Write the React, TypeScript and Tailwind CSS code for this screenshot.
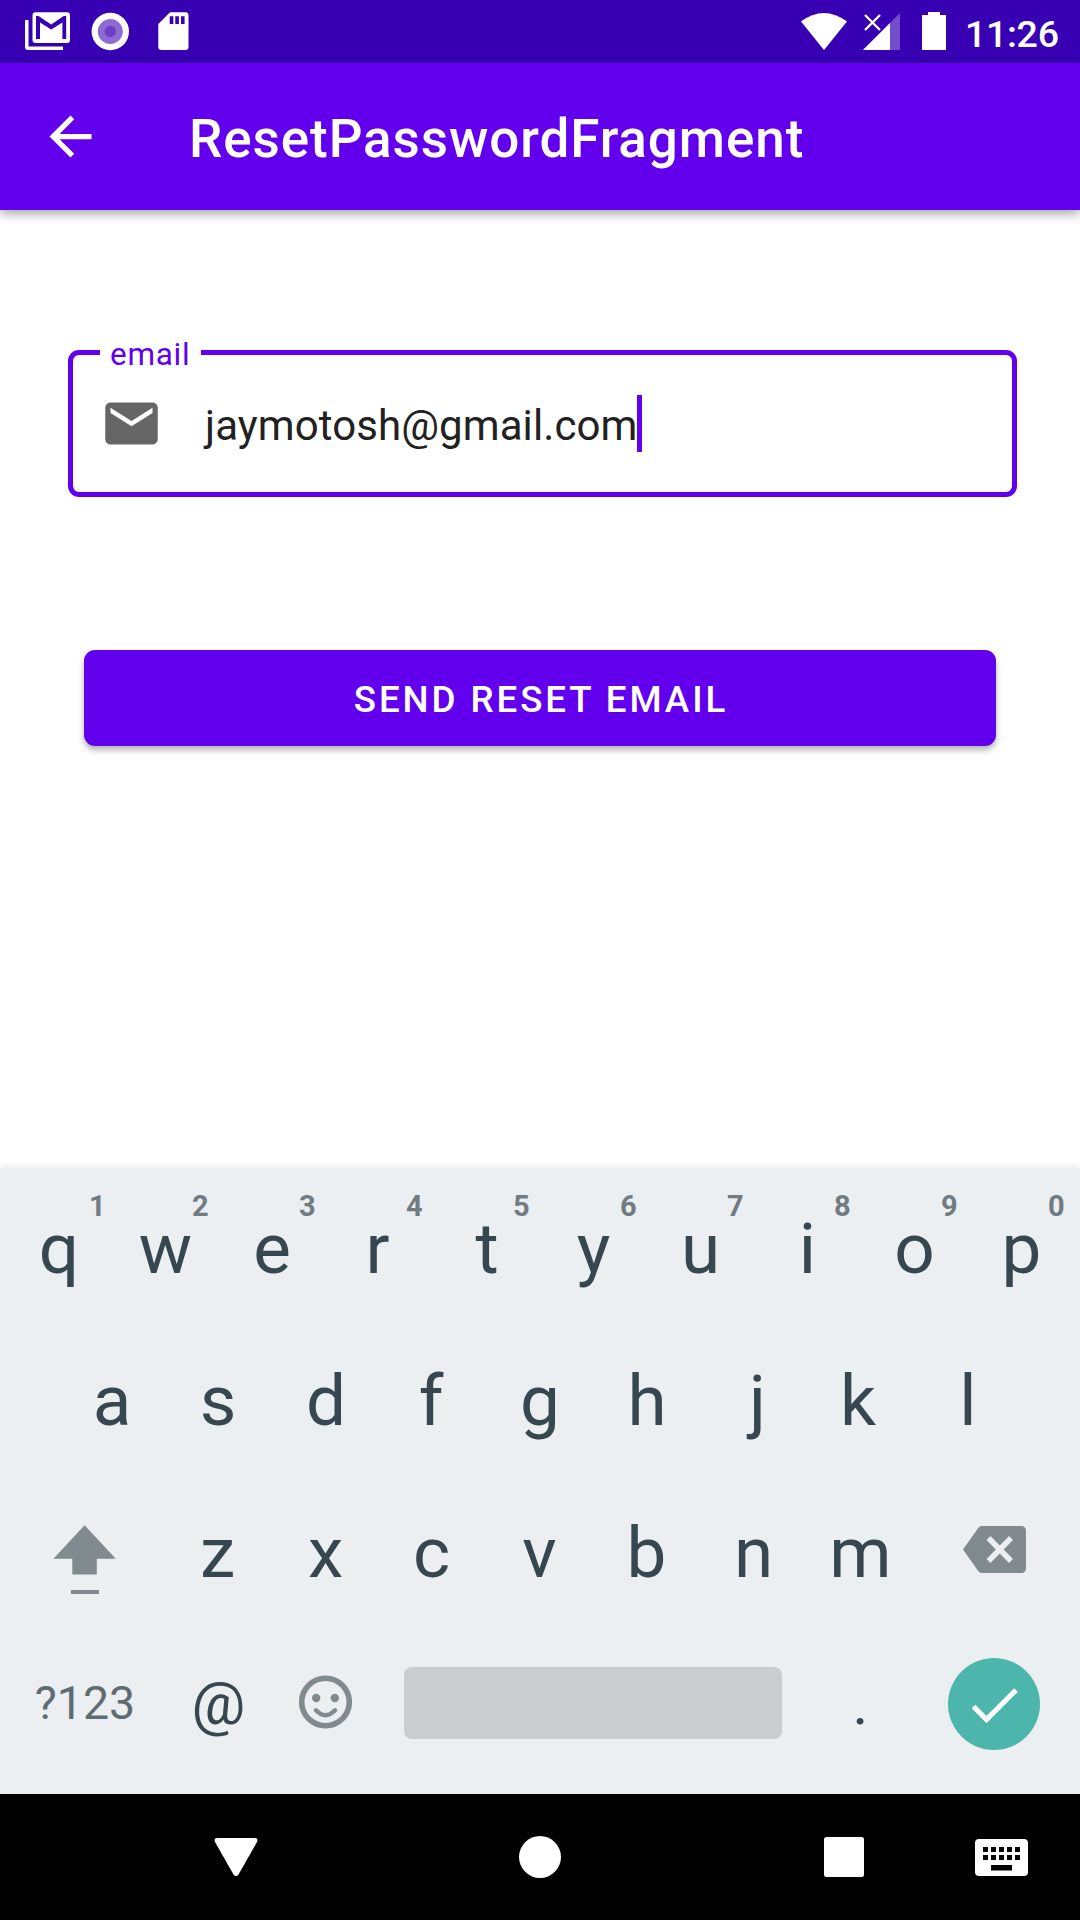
import React from "react";

const hints = ["1", "2", "3", "4", "5", "6", "7", "8", "9", "0"];

// Optical offsets for glyphs whose ink is not centred in the advance width.
const nudge: Record<string, string> = {
  q: "ml-[1px]",
  e: "-ml-[1px]",
  r: "-ml-[4px]",
  t: "ml-[1px]",
  f: "-ml-[4px]",
  j: "ml-[7px]",
  k: "-ml-[6px]",
  s: "-ml-[2px]",
  c: "-ml-[2px]",
  z: "-ml-[2px]",
};

function Key({ label, hint }: { label: string; hint?: string }) {
  return (
    <div className="relative flex h-[152px] w-[107px] justify-center pt-[17px] text-[71px] leading-[84px] text-[#37474f]">
      <span className={nudge[label] ?? ""}>{label}</span>
      {hint && (
        <span
          className={`absolute -top-[1px] text-[29px] leading-[34px] font-bold text-[#717c82] ${
            hint === "1" ? "left-[84px]" : "left-[80px]"
          }`}
        >
          {hint}
        </span>
      )}
    </div>
  );
}

function StatusBar() {
  return (
    <div className="flex h-[63px] items-center bg-[#3700b3] text-white">
      <svg className="h-[63px] w-[540px]" viewBox="0 0 540 63" fill="currentColor">
        <path d="M25 20h3.5v26.500H63V50H28a3 3 0 0 1-3-3z" />
        <path
          fillRule="evenodd"
          d="M35.500 12.300H67a3 3 0 0 1 3 3V40a3 3 0 0 1-3 3H35.500a3 3 0 0 1-3-3V15.300a3 3 0 0 1 3-3zM36 16v23h4V22.500l11.200 7 11.200-7V39h3.800V16h-2.500L51.200 24.500 38.500 16z"
        />
        <circle cx="110.300" cy="31.500" r="18.700" />
        <circle cx="110.300" cy="31.500" r="12.500" fill="#8e6bd2" />
        <circle cx="110.300" cy="31.500" r="5.700" fill="#6c40c4" />
        <path
          fillRule="evenodd"
          d="M170 12.300h15.500a3 3 0 0 1 3 3V47a3 3 0 0 1-3 3H161.300a3 3 0 0 1-3-3V24zM169.700 16.300V24h3.600v-7.700zM175.300 16.300V24h3.600v-7.700zM181 16.300V24h3.600v-7.700z"
        />
      </svg>
      <svg className="h-[63px] w-[426px]" viewBox="540 0 426 63" fill="currentColor">
        <path d="M801 21.500Q823.700 4.500 847 21.500L824 50z" />
        <path d="M900 13v37H863z" fillOpacity=".3" />
        <path d="M890 23v27H863z" />
        <path d="M865 15l15 15M880 15l-15 15" stroke="currentColor" strokeWidth="2.300" />
        <path d="M928 12h12v3h6v35h-24V15h6z" />
      </svg>
      <span className="-ml-[1px] pt-[4px] text-[37.5px] leading-[44px] font-medium tracking-[-0.3px]">11:26</span>
    </div>
  );
}

function AppBar() {
  return (
    <div className="relative flex h-[147px] items-center bg-[#6200ee] pl-[39px] text-white shadow-[0_4px_10px_rgba(0,0,0,0.35)]">
      <svg className="-mt-[1px] h-[63px] w-[63px]" viewBox="0 0 24 24" fill="currentColor">
        <path d="M20 11H7.830l5.590-5.590L12 4l-8 8 8 8 1.410-1.410L7.830 13H20v-2z" />
      </svg>
      <h1 className="mt-[5px] ml-[87px] text-[53px] leading-[62px] font-medium tracking-[0.92px]">
        ResetPasswordFragment
      </h1>
    </div>
  );
}

function EmailField() {
  return (
    <div className="relative mt-[140px] ml-[68px] flex h-[147px] w-[949px] items-center rounded-[11px] border-[5px] border-[#6200ee] pl-[27px]">
      <span className="absolute -top-[18px] left-[27px] h-[36px] w-[101px] bg-white pl-[10px] text-[31.5px] leading-[36px] tracking-[0.7px] text-[#6200ee]">
        email
      </span>
      <svg className="h-[63px] w-[63px]" viewBox="0 0 24 24" fill="#666666">
        <path d="M20 4H4c-1.100 0-1.990.9-1.990 2L2 18c0 1.100.9 2 2 2h16c1.100 0 2-.9 2-2V6c0-1.100-.9-2-2-2zm0 4l-8 5-8-5V6l8 5 8-5v2z" />
      </svg>
      <span className="mt-[5px] ml-[42px] text-[42px] leading-[50px] tracking-[0.1px] text-[#212121]">jaymotosh@gmail.com</span>
      <span className="h-[57px] w-[5px] bg-[#6200ee]" />
    </div>
  );
}

function Keyboard() {
  return (
    <div className="h-[626px] bg-[#eceff1] pt-[22px] shadow-[0_-2px_6px_rgba(0,0,0,0.08)]">
      <div className="flex h-[152px] px-[5px]">
        {"qwertyuiop".split("").map((c, i) => (
          <Key key={c} label={c} hint={hints[i]} />
        ))}
      </div>
      <div className="flex h-[152px] px-[58.5px]">
        {"asdfghjkl".split("").map((c) => (
          <Key key={c} label={c} />
        ))}
      </div>
      <div className="flex h-[152px]">
        <svg className="h-[100px] w-[165px]" viewBox="0 0 165 100" fill="#808a8f">
          <path d="M84.600 31.200l31.200 33.600H96.800v15.700H72.300V64.800H53.400z" />
          <path d="M71 96h28v4H71z" />
        </svg>
        {"zxcvbnm".split("").map((c) => (
          <Key key={c} label={c} />
        ))}
        <svg className="h-[100px] w-[166px]" viewBox="914 1494 166 100">
          <path
            d="M982 1526h39.500a4.500 4.500 0 0 1 4.500 4.500v38a4.500 4.500 0 0 1-4.500 4.500H982q-2.500 0-4-2.300L963 1549.500l15-21.200q1.500-2.300 4-2.300z"
            fill="#808a8f"
          />
          <path d="M988.500 1538l22.500 23M1011 1538l-22.500 23" stroke="#eceff1" strokeWidth="5.500" />
        </svg>
      </div>
      <div className="flex h-[116px] items-center">
        <span className="mb-[2px] ml-[32px] w-[106px] text-center text-[46.5px] leading-[54px] text-[#5f6c72]">?123</span>
        <span className="ml-[27px] w-[107px] text-center text-[60px] leading-[70px] text-[#37474f]">@</span>
        <svg className="mb-[5px] ml-[26px] h-[54px] w-[54px]" viewBox="-27.500 -27 54 54" fill="#808a8f">
          <circle r="23.800" fill="none" stroke="#808a8f" strokeWidth="5.600" />
          <circle cx="-9.300" cy="-4" r="4.200" />
          <circle cx="9.300" cy="-4" r="4.200" />
          <path d="M-9.500 8.300Q0 18 9.500 8.300" fill="none" stroke="#808a8f" strokeWidth="4.500" strokeLinecap="round" />
        </svg>
        <div className="mb-[2px] ml-[52px] h-[72px] w-[378px] rounded-[8px] bg-[#c9cdd0]" />
        <span className="ml-[25px] w-[107px] text-center text-[60px] leading-[70px] text-[#37474f]">.</span>
        <div className="ml-[34px] flex h-[92px] w-[92px] items-center justify-center rounded-full bg-[#4db6ac]">
          <svg className="h-[92px] w-[92px]" viewBox="0 0 92 92" fill="none">
            <path d="M25.500 48.500L38.500 61.500 68 32" stroke="white" strokeWidth="5.200" />
          </svg>
        </div>
      </div>
    </div>
  );
}

function NavBar() {
  return (
    <div className="h-[126px] bg-black">
      <svg className="h-[126px] w-[1080px]" viewBox="0 1794 1080 126" fill="white">
        <path d="M217.500 1838h37q4 0 2.500 4l-18.500 32.500q-2.500 3-5 0L215 1842q-1.500-4 2.500-4z" />
        <circle cx="540" cy="1857" r="21" />
        <rect x="824" y="1837" width="40" height="40" rx="2.500" />
        <path
          fillRule="evenodd"
          d="M979 1839h45a4 4 0 0 1 4 4v29a4 4 0 0 1-4 4H979a4 4 0 0 1-4-4v-29a4 4 0 0 1 4-4zM983 1847v5h5v-5zM991 1847v5h5v-5zM999 1847v5h5v-5zM1007 1847v5h5v-5zM1015 1847v5h5v-5zM983 1855v5h5v-5zM991 1855v5h5v-5zM999 1855v5h5v-5zM1007 1855v5h5v-5zM1015 1855v5h5v-5zM991 1865v5.500h21v-5.500z"
        />
      </svg>
    </div>
  );
}

export default function App() {
  return (
    <div className="flex h-[1920px] w-[1080px] flex-col overflow-hidden bg-white font-['Roboto',sans-serif]">
      <StatusBar />
      <AppBar />
      <main className="flex-1">
        <EmailField />
        <button className="mt-[153px] ml-[84px] block h-[96px] w-[912px] rounded-[11px] bg-[#6200ee] pt-[3px] pl-[2px] text-[36.75px] font-medium tracking-[2.9px] text-white shadow-[0_4px_6px_rgba(0,0,0,0.3)]">
          SEND RESET EMAIL
        </button>
      </main>
      <Keyboard />
      <NavBar />
    </div>
  );
}
